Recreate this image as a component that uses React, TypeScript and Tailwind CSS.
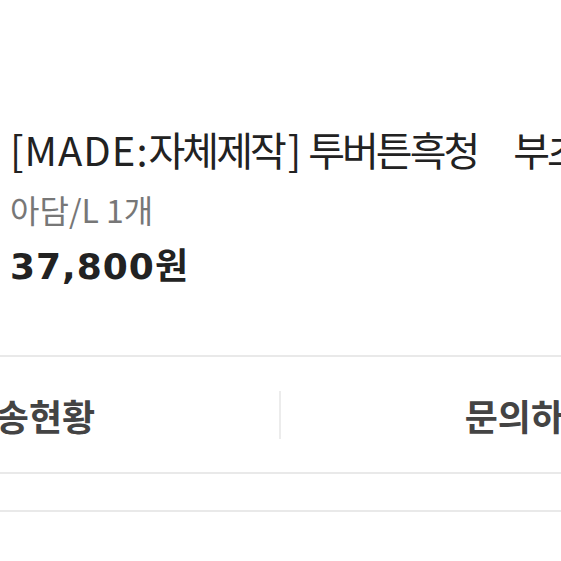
const kr = "font-['Noto_Sans_CJK_KR',sans-serif]";

function OrderSummary() {
  return (
    <div className={`pl-[10px] pt-[125px] ${kr}`}>
      <h1 className="whitespace-nowrap text-[40px] leading-[48px] text-[#222]">
        <span className="tracking-[1px]">[MADE:</span>
        <span className="tracking-[-3px]">자체제작</span>
        <span className="ml-[4px] mr-[7px]">]</span>
        <span className="tracking-[-3px]">투버튼흑청</span>
        <span className="ml-[36px] tracking-[-3px]">부츠 앵클</span>
      </h1>
      <p className="mt-[18px] whitespace-nowrap text-[32px] leading-[36px] text-[#777]">
        아담/L 1개
      </p>
      <p className="mt-[16px] whitespace-nowrap text-[36px] font-bold leading-[40px] text-[#222]">
        <span className="font-['DejaVu_Sans',sans-serif] tracking-[1px]">37,800</span>원
      </p>
    </div>
  );
}

function ActionTabs() {
  return (
    <div className={`mt-[68px] ml-[-221px] flex w-[1002px] items-center border-y-2 border-[#e9e9e9] ${kr}`}>
      <div className="flex h-[115px] w-[500px] items-center justify-center">
        <span className="text-[36px] font-bold text-[#444]">배송현황</span>
      </div>
      <div className="h-[48px] w-[2px] bg-[#ececec]" />
      <div className="flex h-[115px] w-[500px] items-center justify-center">
        <span className="text-[36px] font-bold text-[#444]">문의하기</span>
      </div>
    </div>
  );
}

export default function App() {
  return (
    <div className="h-[561px] w-[561px] overflow-hidden bg-white">
      <OrderSummary />
      <ActionTabs />
      <div className="mt-[36px] h-[2px] bg-[#e9e9e9]" />
    </div>
  );
}
